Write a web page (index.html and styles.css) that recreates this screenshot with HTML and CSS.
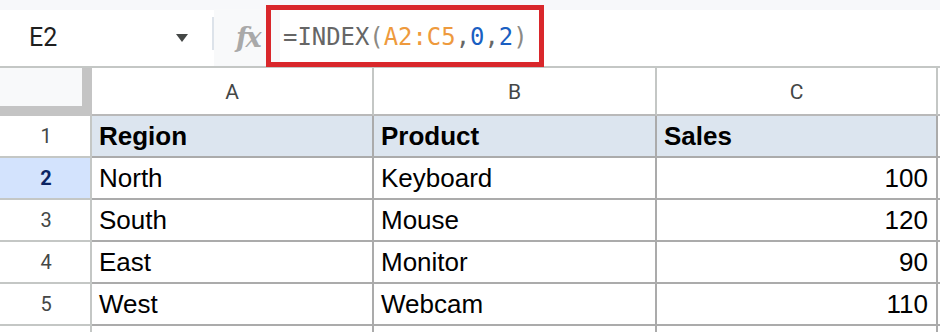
FILE: index.html
```html
<!DOCTYPE html>
<html>
<head>
<meta charset="utf-8">
<link rel="stylesheet" href="styles.css">
</head>
<body>
<div class="app">
  <div class="toolbar">
    <div class="namebox">
      <span class="ref">E2</span>
      <span class="caret"></span>
    </div>
    <div class="sep-wrap"><div class="sep"></div></div>
    <div class="fx">fx</div>
    <div class="formula">
      <span class="f-fn">=INDEX</span><span class="f-par">(</span><span class="f-rng">A2:C5</span><span class="f-fn">,</span><span class="f-num">0</span><span class="f-fn">,</span><span class="f-num">2</span><span class="f-par">)</span>
    </div>
    <div class="highlight"></div>
  </div>
  <div class="sheet">
    <div class="corner"><div class="corner-inner"></div></div>
    <div class="colhead">A</div>
    <div class="colhead">B</div>
    <div class="colhead">C</div>
    <div class="colhead tail"></div>

    <div class="rowhead">1</div>
    <div class="cell hdr">Region</div>
    <div class="cell hdr">Product</div>
    <div class="cell hdr">Sales</div>
    <div class="cell tail"></div>

    <div class="rowhead active">2</div>
    <div class="cell">North</div>
    <div class="cell">Keyboard</div>
    <div class="cell num">100</div>
    <div class="cell tail"></div>

    <div class="rowhead">3</div>
    <div class="cell">South</div>
    <div class="cell">Mouse</div>
    <div class="cell num">120</div>
    <div class="cell tail"></div>

    <div class="rowhead">4</div>
    <div class="cell">East</div>
    <div class="cell">Monitor</div>
    <div class="cell num">90</div>
    <div class="cell tail"></div>

    <div class="rowhead">5</div>
    <div class="cell">West</div>
    <div class="cell">Webcam</div>
    <div class="cell num">110</div>
    <div class="cell tail"></div>

    <div class="rowhead stub"></div>
    <div class="cell stub"></div>
    <div class="cell stub"></div>
    <div class="cell stub"></div>
    <div class="cell tail stub"></div>
  </div>
</div>
</body>
</html>
```
FILE: styles.css
```css
* { box-sizing: border-box; }
html, body {
  margin: 0;
  padding: 0;
  background: #ffffff;
  overflow: hidden;
}
body {
  width: 940px;
  height: 332px;
  font-family: "Liberation Sans", Arial, sans-serif;
}
.app { width: 940px; }

.toolbar {
  position: relative;
  display: flex;
  height: 66px;
  padding-top: 10px;
  background: #f7f8fa;
}
.namebox {
  width: 212px;
  height: 56px;
  background: #ffffff;
  display: flex;
  align-items: center;
  justify-content: space-between;
  padding-left: 29px;
  padding-right: 24px;
}
.ref {
  font-family: Roboto, "Liberation Sans", sans-serif;
  font-size: 25px;
  color: #1f1f1f;
  margin-top: -2px;
}
.caret {
  width: 0;
  height: 0;
  border-left: 6.5px solid transparent;
  border-right: 6.5px solid transparent;
  border-top: 8px solid #444746;
  margin-top: -1px;
}
.sep-wrap {
  width: 2px;
  height: 56px;
  background: #ffffff;
  display: flex;
  align-items: center;
}
.sep {
  width: 2px;
  height: 33px;
  margin-top: -10px;
  background: #dde3ea;
}
.fx {
  width: 66px;
  height: 56px;
  background: #f8f9fa;
  padding-left: 22px;
  display: flex;
  align-items: center;
  font-family: "DejaVu Serif", "Liberation Serif", serif;
  font-style: italic;
  font-weight: bold;
  font-size: 27px;
  color: #a9a9a9;
  letter-spacing: -2px;
  margin-top: -1px;
}
.formula {
  flex: 1;
  height: 56px;
  background: #ffffff;
  display: flex;
  align-items: center;
  padding-left: 3px;
  font-family: "DejaVu Sans Mono", "Liberation Mono", monospace;
  font-size: 23.9px;
  white-space: pre;
  padding-bottom: 2px;
}
.f-fn { color: #666666; }
.f-par { color: #8c8a84; }
.f-rng { color: #ee9a3d; }
.f-num { color: #1a5fc2; }

.highlight {
  position: absolute;
  left: 266px;
  top: 5px;
  width: 278px;
  height: 62px;
  border: 5px solid #d9272b;
  pointer-events: none;
}

.sheet {
  display: grid;
  grid-template-columns: 92px 282px 283px 281px 2px;
  grid-template-rows: 48px repeat(5, 42px) 6px;
  border-top: 2px solid #c4c7c5;
}
.corner {
  background: #c4c4c4;
  height: 48px;
}
.corner-inner {
  width: 82px;
  height: 38px;
  background: #f8f9fa;
}
.colhead {
  display: flex;
  align-items: center;
  justify-content: center;
  font-family: Roboto, "Liberation Sans", sans-serif;
  font-size: 21px;
  color: #444746;
  background: #ffffff;
  border-right: 2px solid #c4c7c5;
  border-bottom: 2px solid #b9b9b9;
  padding-top: 1px;
}
.colhead.tail { border-right: none; }
.rowhead {
  display: flex;
  align-items: center;
  justify-content: center;
  font-family: Roboto, "Liberation Sans", sans-serif;
  font-size: 20px;
  color: #444746;
  background: #ffffff;
  border-right: 2px solid #c4c7c5;
  border-bottom: 2px solid #c4c7c5;
  padding-left: 2px;
}
.rowhead.active {
  background: #d3e3fd;
  color: #0b2463;
  font-weight: bold;
}
.cell {
  display: flex;
  align-items: center;
  padding: 0 8px 0 7px;
  font-size: 26px;
  color: #000000;
  background: #ffffff;
  border-right: 2px solid #ababab;
  border-bottom: 2px solid #ababab;
}
.cell.hdr {
  background: #dce5ef;
  font-weight: bold;
}
.cell.num { justify-content: flex-end; }
.cell.tail {
  border-right: none;
  background: #ffffff;
}
.stub { border-bottom: none; }
```
